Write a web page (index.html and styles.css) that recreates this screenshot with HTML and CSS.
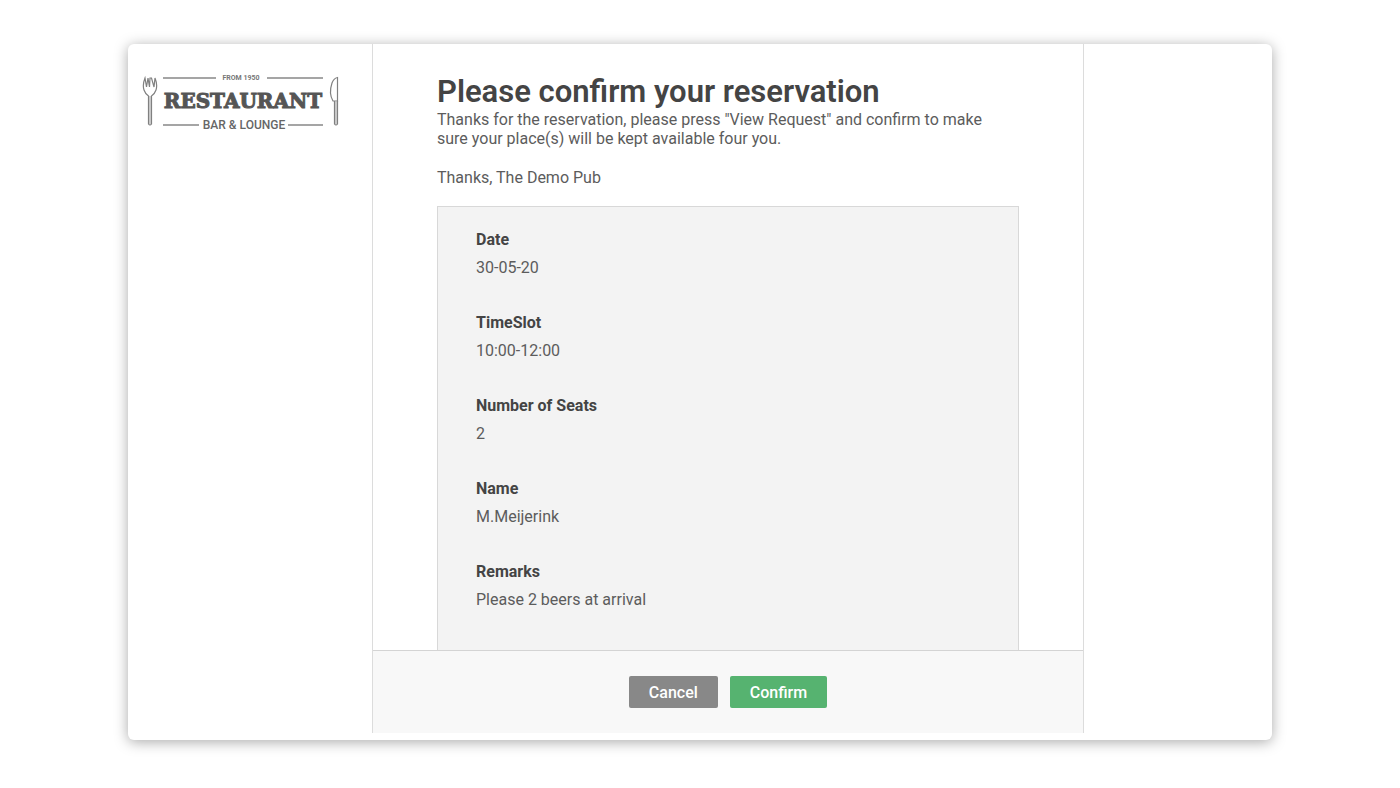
FILE: index.html
```html
<!DOCTYPE html>
<html lang="en">

<head>
  <meta charset="UTF-8">
  <meta name="viewport" content="width=device-width, initial-scale=1.0">
  <title>Please confirm your reservation</title>
  <link rel="stylesheet" href="styles.css">
</head>

<body>
<div class="card">
  <aside class="side">
    <svg class="logo" viewBox="0 0 198 64" role="img" aria-label="Restaurant Bar &amp; Lounge">
      <!-- fork -->
      <g class="outline">
        <path d="M3 6C1 11 1 15 2 18C3 21 5 23 6.500 24V52Q8 54 9.500 52V24C11 23 13 21 14 18C15 15 15 11 13 6L12 15L9.500 6L8 6L7.500 15L6 6L4.500 15Z"/>
        <path class="shade" d="M8 24V52"/>
      </g>
      <!-- knife -->
      <g class="outline">
        <path d="M195.500 5.500V29H191C188 24 188 17 190 11C191 8 193 6 195.500 5.500Z"/>
        <path d="M192.500 29V52Q194 54 195.500 52V29"/>
        <path class="shade" d="M194 30V52"/>
      </g>
      <path class="rule" d="M21 6H74M125 6H181M21 53H57M146 53H181"/>
      <text class="since" x="99" y="8">FROM 1950</text>
      <text class="brand" x="101" y="36">RESTAURANT</text>
      <text class="tagline" x="102" y="57">BAR &amp; LOUNGE</text>
    </svg>
  </aside>

  <main class="main">
    <div class="content">
      <h1>Please confirm your reservation</h1>
      <p>Thanks for the reservation, please press "View Request" and confirm to make sure your place(s) will be kept available four you.</p>
      <p class="sign">Thanks, The Demo Pub</p>
      <dl class="details">
        <dt>Date</dt>
        <dd>30-05-20</dd>
        <dt>TimeSlot</dt>
        <dd>10:00-12:00</dd>
        <dt>Number of Seats</dt>
        <dd>2</dd>
        <dt>Name</dt>
        <dd>M.Meijerink</dd>
        <dt>Remarks</dt>
        <dd>Please 2 beers at arrival</dd>
      </dl>
    </div>
    <div class="actions">
      <button type="button" class="btn cancel">Cancel</button>
      <button type="button" class="btn confirm">Confirm</button>
    </div>
  </main>
</div>
</body>

</html>
```

FILE: styles.css
```css
* {
  box-sizing: border-box;
}
body {
  margin: 0;
  height: 100vh;
  padding: 44px 128px 48px;
  background: #fff;
  color: #5c5c5c;
  font-family: Roboto, "Liberation Sans", sans-serif;
  font-size: 16px;
  line-height: 19px;
}
.card {
  display: grid;
  grid-template-columns: 244px 1fr 188px;
  height: 100%;
  padding-bottom: 7px;
  border-radius: 6px;
  background: #fff;
  box-shadow: 0 2px 14px rgba(0, 0, 0, 0.34);
}
.side {
  padding: 28px 14px;
}
.logo {
  display: block;
  width: 198px;
}
.outline {
  fill: none;
  stroke: #808080;
  stroke-width: 1.2;
}
.shade {
  stroke: #aaa;
}
.rule {
  stroke: #888;
  stroke-width: 1.5;
}
.logo text {
  text-anchor: middle;
  fill: #555;
}
.logo .since {
  fill: #777;
  font-size: 7px;
  font-weight: 700;
}
.logo .brand {
  font-family: "DejaVu Serif", serif;
  font-size: 20px;
  font-weight: 700;
  stroke: #555;
  stroke-width: 1;
}
.logo .tagline {
  fill: #666;
  font-size: 12px;
  font-weight: 500;
}

.main {
  display: flex;
  flex-direction: column;
  min-height: 0;
  border-left: 1px solid #dcdcdc;
  border-right: 1px solid #dcdcdc;
}
.content {
  flex: 1;
  min-height: 0;
  overflow: hidden;
  padding: 29px 64px 0;
}
h1 {
  margin: 0;
  color: #444;
  font-size: 31px;
  font-weight: 600;
  line-height: 37px;
}
p {
  margin: 0;
  padding-right: 12px;
}
.sign {
  padding: 20px 0 19px;
}
.details {
  margin: 0;
  padding: 19px 38px;
  border: 1px solid #d8d8d8;
  background: #f3f3f3;
  line-height: 28px;
}
.details dt {
  color: #444;
  font-weight: 700;
}
.details dd {
  margin: 0 0 27px;
}

.actions {
  display: flex;
  justify-content: center;
  align-items: center;
  gap: 12px;
  height: 83px;
  border-top: 1px solid #d4d4d4;
  background: #f8f8f8;
}
.btn {
  height: 32px;
  padding: 0 20px;
  border: 0;
  border-radius: 2px;
  color: #fff;
  font: 500 16px Roboto, "Liberation Sans", sans-serif;
  cursor: pointer;
}
.cancel {
  background: #888;
}
.confirm {
  background: #56b370;
}
```
